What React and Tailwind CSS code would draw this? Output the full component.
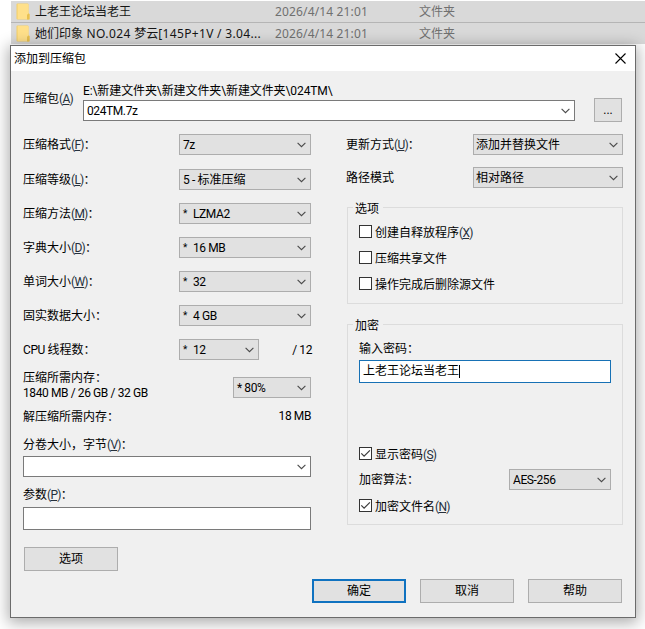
import React from 'react';

function Chevron({ className = '' }) {
  return (
    <svg className={`shrink-0 ${className}`} width="9" height="6" viewBox="0 0 9 6" fill="none">
      <path d="M0.6 0.8L4.5 4.7L8.4 0.8" stroke="#4a4a4a" strokeWidth="1.1" />
    </svg>
  );
}

function Combo({ children, className = '', editable = false }) {
  const look = editable ? 'border-[#7a7a7a] bg-white' : 'border-[#adadad] bg-[#e1e1e1]';
  return (
    <div className={`flex h-[21px] shrink-0 items-center justify-between border pr-1 pl-[3px] ${look} ${className}`}>
      <span className="flex whitespace-pre">{children}</span>
      <Chevron />
    </div>
  );
}

function Latin({ children }) {
  return <span className="tracking-[-0.4px]">{children}</span>;
}

function Key({ k }) {
  return (
    <span className="tracking-[-0.75px] text-[#26303c]">
      (<span className="underline underline-offset-1">{k}</span>)
    </span>
  );
}

function Auto({ children }) {
  return (
    <>
      <span className="w-[10px] text-[10px]">*</span>
      <Latin>{children}</Latin>
    </>
  );
}

function Button({ children, primary = false, className = '' }) {
  const edge = primary ? 'border-2 border-[#0f72c0]' : 'border border-[#adadad]';
  return (
    <button className={`flex h-6 w-[94px] shrink-0 items-center justify-center bg-[#e1e1e1] ${edge} ${className}`}>
      {children}
    </button>
  );
}

function Check({ checked = false, children, className = '' }) {
  return (
    <label className={`flex h-[13px] items-center gap-[3px] whitespace-nowrap ${className}`}>
      <span className="flex size-[13px] shrink-0 items-center justify-center border border-[#333] bg-white">
        {checked && (
          <svg width="11" height="11" viewBox="0 0 11 11" fill="none">
            <path d="M1.3 5.3L4.1 8.1L9.9 2.3" stroke="#3c3c3c" strokeWidth="1.2" />
          </svg>
        )}
      </span>
      <span className="pt-0.5">{children}</span>
    </label>
  );
}

function Row({ label, children, className = 'mb-[13px]' }) {
  return (
    <div className={`flex h-[21px] items-center ${className}`}>
      <div className="w-[156px] shrink-0 pt-px whitespace-nowrap">{label}</div>
      {children}
    </div>
  );
}

function Group({ title, children, className = '' }) {
  return (
    <section className={`ml-px border border-[#dcdcdc] px-[11px] ${className}`}>
      <h2 className="-mt-[9px] -ml-[6px] flex h-[18px] w-[30px] items-center bg-[#f0f0f0] pt-px pl-[2px] whitespace-nowrap">{title}</h2>
      {children}
    </section>
  );
}

function Folder() {
  return (
    <svg className="shrink-0" width="14" height="17" viewBox="0 0 14 17">
      <path d="M0.5 1.5Q0.5 0.5 1.5 0.5H11.5Q12.5 0.5 12.5 1.5V10L13.5 11V15.5Q13.5 16.5 12.5 16.5H1.5Q0.5 16.5 0.5 15.5Z" fill="#f3cf68" />
      <path d="M1.6 1H11.5Q12.5 1 12.5 1.8V10.5L11 12V16H1.6Z" fill="#ffe08a" />
      <path d="M11 16.5V12L12.5 10.5L13.5 11.5V16.5Z" fill="#e9c04f" />
    </svg>
  );
}

function FileRow({ name, className }) {
  return (
    <div className={`flex items-center bg-[#d9d9d9] pl-[5px] text-[#707070] ${className}`}>
      <Folder />
      <span className="ml-[5px] w-[240px] shrink-0 whitespace-nowrap text-[#151515]">{name}</span>
      <span className="w-[144px] shrink-0 tracking-[0.15px]">2026/4/14 21:01</span>
      <span>文件夹</span>
    </div>
  );
}

export default function App() {
  return (
    <div className="relative h-[629px] w-[645px] overflow-hidden bg-white text-[12px] leading-4 text-black">
      <div className="ml-[11px] pt-px font-['Noto_Sans','Noto_Sans_CJK_SC',sans-serif]">
        <FileRow className="h-[21px]" name="上老王论坛当老王" />
        <FileRow
          className="h-[22px] border-t border-[#b5b5b5]"
          name={
            <>
              她们印象<span className="tracking-[0.4px]"> NO.024 </span>梦云<span className="tracking-[0.33px]">[145P+1V / 3.04...</span>
            </>
          }
        />
      </div>

      <div className="absolute top-[45px] left-[10px] flex h-[573px] w-[626px] flex-col border border-[#6b6b6b] bg-[#f0f0f0] font-['Roboto','Noto_Sans_CJK_SC',sans-serif] shadow-[0_3px_14px_2px_rgba(0,0,0,0.32)]">
        <header className="flex h-[25px] shrink-0 items-center justify-between bg-white pr-[9px] pl-[3px]">
          <h1>添加到压缩包</h1>
          <svg width="11" height="11" viewBox="0 0 11 11">
            <path d="M0.5 0.5L10.5 10.5M10.5 0.5L0.5 10.5" stroke="#000" strokeWidth="1.1" />
          </svg>
        </header>

        <div className="flex h-[63px] shrink-0 pl-3">
          <div className="w-[60px] shrink-0 pt-5">压缩包<Key k="A" /></div>
          <div className="w-[492px] shrink-0 pt-3">
            <div className="h-[17px] tracking-[-0.1px]">E:\新建文件夹\新建文件夹\新建文件夹\024TM\</div>
            <Combo editable><Latin>024TM.7z</Latin></Combo>
          </div>
          <Button className="mt-[27px] ml-[19px] w-7!">...</Button>
        </div>

        <div className="flex h-[445px] shrink-0 pl-3">
          <div className="w-[288px] shrink-0">
            <Row className="mb-[14px]" label={<>压缩格式<Key k="F" />：</>}><Combo className="w-[132px]"><Latin>7z</Latin></Combo></Row>
            <Row label={<>压缩等级<Key k="L" />：</>}><Combo className="w-[132px]"><Latin>5 - </Latin>标准压缩</Combo></Row>
            <Row label={<>压缩方法<Key k="M" />：</>}><Combo className="w-[132px]"><Auto>LZMA2</Auto></Combo></Row>
            <Row label={<>字典大小<Key k="D" />：</>}><Combo className="w-[132px]"><Auto>16 MB</Auto></Combo></Row>
            <Row label={<>单词大小<Key k="W" />：</>}><Combo className="w-[132px]"><Auto>32</Auto></Combo></Row>
            <Row label="固实数据大小："><Combo className="w-[132px]"><Auto>4 GB</Auto></Combo></Row>
            <Row className="mb-[9px]" label={<><Latin>CPU </Latin>线程数：</>}>
              <Combo className="w-20"><Auto>12</Auto></Combo>
              <span className="-mr-px ml-auto"><Latin>/ 12</Latin></span>
            </Row>
            <div className="flex h-[39px] justify-between">
              <div>
                <div className="relative top-px">压缩所需内存：</div>
                <div><Latin>1840 MB / 26 GB / 32 GB</Latin></div>
              </div>
              <Combo className="mt-2 w-[78px]"><Latin>* 80%</Latin></Combo>
            </div>
            <div className="flex h-7 justify-between"><span className="pt-px">解压缩所需内存：</span><Latin>18 MB</Latin></div>
            <div className="h-5 pt-px">分卷大小，字节<Key k="V" />：</div>
            <Combo editable />
            <div className="mt-[9px] h-[21px] pt-px">参数<Key k="P" />：</div>
            <div className="h-[23px] border border-[#7a7a7a] bg-white" />
            <Button className="mt-[17px] ml-px">选项</Button>
          </div>

          <div className="ml-[35px] w-[277px] shrink-0">
            <div className="mb-3 flex h-[21px] items-center justify-between">
              <span className="pt-px">更新方式<Key k="U" />：</span>
              <Combo className="w-[150px] pl-[2px]!">添加并替换文件</Combo>
            </div>
            <div className="mb-[19px] flex h-[21px] items-center justify-between">
              <span>路径模式</span>
              <Combo className="w-[150px] pl-[2px]!">相对路径</Combo>
            </div>
            <Group title="选项" className="h-[97px]">
              <div className="flex flex-col gap-[13px] pt-2">
                <Check>创建自释放程序<Key k="X" /></Check>
                <Check>压缩共享文件</Check>
                <Check>操作完成后删除源文件</Check>
              </div>
            </Group>
            <Group title="加密" className="mt-5 h-[201px]">
              <div className="mt-[6px] h-5 pt-px">输入密码：</div>
              <div className="flex h-[23px] items-center border border-[#1771b5] bg-white pb-px pl-[3px]">
                上老王论坛当老王<span className="h-[13px] w-px bg-black" />
              </div>
              <Check checked className="mt-16">显示密码<Key k="S" /></Check>
              <div className="mt-[9px] flex items-center justify-between">
                <span>加密算法：</span>
                <Combo className="w-[102px]"><Latin>AES-256</Latin></Combo>
              </div>
              <Check checked className="mt-[9px]">加密文件名<Key k="N" /></Check>
            </Group>
          </div>
        </div>

        <footer className="flex justify-end gap-[14px] pr-[13px]">
          <Button primary>确定</Button>
          <Button>取消</Button>
          <Button>帮助</Button>
        </footer>
      </div>
    </div>
  );
}
